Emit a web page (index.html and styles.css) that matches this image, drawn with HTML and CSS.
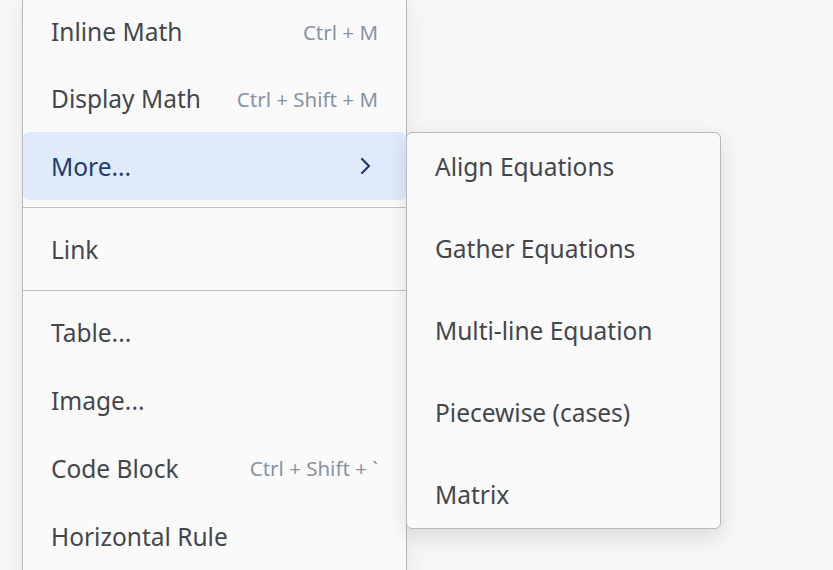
FILE: index.html
```html
<!DOCTYPE html>
<html lang="en">
  <head>
    <meta charset="UTF-8" />
    <title>Insert Menu</title>
    <link rel="stylesheet" href="styles.css">
  </head>
  <body>
    <div class="stage">
      <div class="menu">
        <div class="item short"><span class="label">Inline Math</span><span class="keys">Ctrl + M</span></div>
        <div class="item short"><span class="label">Display Math</span><span class="keys">Ctrl + Shift + M</span></div>
        <div class="item active">
          <span class="label">More...</span>
          <svg class="chev" width="14" height="18" viewBox="0 0 14 18"><path d="M4 2 L11 9 L4 16" fill="none" stroke="#1f3d6d" stroke-width="2.2" stroke-linecap="round" stroke-linejoin="round"/></svg>
          <div class="submenu">
            <div class="subitem">Align Equations</div>
            <div class="subitem">Gather Equations</div>
            <div class="subitem">Multi-line Equation</div>
            <div class="subitem">Piecewise (cases)</div>
            <div class="subitem">Matrix</div>
          </div>
        </div>
        <div class="sep"></div>
        <div class="item"><span class="label">Link</span></div>
        <div class="sep"></div>
        <div class="item"><span class="label">Table...</span></div>
        <div class="item"><span class="label">Image...</span></div>
        <div class="item"><span class="label">Code Block</span><span class="keys">Ctrl + Shift + `</span></div>
        <div class="item"><span class="label">Horizontal Rule</span></div>
      </div>
    </div>
  </body>
</html>
```
FILE: styles.css
```css
html, body {
  margin: 0;
  height: 100%;
  overflow: hidden;
  background: #f7f7f7;
  font-family: "Noto Sans", "Open Sans", sans-serif;
}

.stage {
  padding-left: 22px;
}

.menu {
  width: 383px;
  margin-top: -2px;
  background: #fafafa;
  border-left: 1px solid #b4b8bd;
  border-right: 1px solid #b4b8bd;
  box-shadow: 0 6px 20px rgba(0, 0, 0, 0.08);
  height: 640px;
}

.item {
  position: relative;
  height: 68px;
  display: flex;
  align-items: center;
  justify-content: space-between;
  padding: 0 28px;
  color: #43474d;
  font-size: 24.5px;
}

.item.short {
  height: 67px;
}

.item .keys {
  font-size: 20.5px;
  color: #8793a3;
}

.item.active {
  background: #dfeafb;
  border-radius: 6px;
  color: #1f3d6d;
  padding-right: 34px;
}

.chev {
  display: block;
}

.sep {
  height: 1px;
  background: #bfc3c8;
  margin: 7px 0;
}

.submenu {
  position: absolute;
  left: 383px;
  top: 0;
  width: 313px;
  background: #fafafa;
  border: 1px solid #b4b8bd;
  border-radius: 6px;
  box-shadow: 0 8px 22px rgba(0, 0, 0, 0.12);
  display: flex;
  flex-direction: column;
  gap: 15px;
}

.subitem {
  height: 67px;
  display: flex;
  align-items: center;
  padding-left: 28px;
  color: #43474d;
  font-size: 24.5px;
}
```
